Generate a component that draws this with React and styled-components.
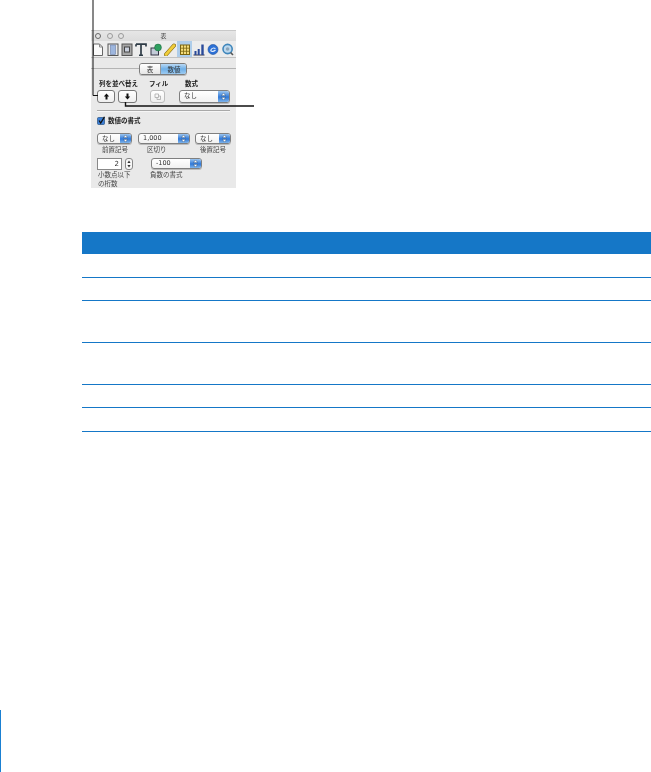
import React from "react";
import styled, { createGlobalStyle } from "styled-components";

const Global = createGlobalStyle`
  html, body { margin: 0; padding: 0; background: #fff; }
  body { font-family: "Liberation Sans", "Noto Sans CJK JP", sans-serif; }
`;
const BLUE = "#1577c7";
const CJK = `"Noto Sans CJK JP", "Liberation Sans", sans-serif`;

const Page = styled.div`
  position: relative; width: 651px; height: 772px; overflow: hidden;
  display: flex; flex-direction: column; background: #fff;
`;
const Leaders = styled.svg`
  position: absolute; left: 0; top: 0; width: 651px; height: 120px; pointer-events: none; z-index: 2;
`;
const Panel = styled.section`
  width: 145px; height: 158px; margin: 30px 0 44px 91px; background: #e9e9e9; overflow: hidden;
  display: flex; flex-direction: column; font-family: ${CJK}; filter: blur(0.45px); flex: none;
`;
const TitleBar = styled.div`
  height: 11px; flex: none; display: flex; align-items: center; gap: 5.5px; padding-left: 4px;
  background: linear-gradient(#c8c8c8 0, #c8c8c8 1px, #e6e6e6 1px, #dcdcdc 100%);
`;
const Light = styled.i`
  width: 6px; height: 6px; border-radius: 50%; flex: none; box-sizing: border-box;
  border: 1px solid ${p => (p.$dark ? "#666" : "#9a9a9a")}; background: #e4e4e4;
`;
const WinTitle = styled.span`
  font-size: 6px; color: #444; margin-left: 31px; line-height: 10px;
`;
const Toolbar = styled.div`
  height: 16px; flex: none; display: flex; background: #ececec; border-bottom: 1px solid #c2c2c2;
`;
const Tool = styled.div`
  width: 14.4px; height: 16px; flex: none; display: flex; align-items: center; justify-content: center;
  background: ${p => (p.$on ? "#aecdea" : "transparent")};
  svg { width: 12px; height: 13px; display: block; }
`;
const TabStrip = styled.div`
  flex: none; height: 12px; margin-top: 5px; padding-left: 48px;
  background: linear-gradient(transparent 5px, #b4b4b4 5px, #b4b4b4 6px, transparent 6px);
`;
const Tabs = styled.div`
  display: flex; height: 12px; width: 48px; box-sizing: border-box;
  border: 1px solid #7c7c7c; border-radius: 3px; overflow: hidden; box-shadow: 0 1px 0 #bbb;
`;
const Tab = styled.div`
  width: ${p => p.$w}px; flex: none; font-size: 6.5px; line-height: 10px; text-align: center; color: #333;
  background: ${p => (p.$on ? "linear-gradient(#b9d9f5, #6fb0e8 50%, #9dcbf2)" : "linear-gradient(#fff, #e6e6e6)")};
  border-right: ${p => (p.$on ? "none" : "1px solid #999")};
`;
const LabelRow = styled.div`
  display: flex; flex: none; height: ${p => p.$h || 7}px; margin-top: ${p => p.$mt || 0}px;
`;
const Label = styled.span`
  flex: none; width: ${p => p.$w}px; margin-left: ${p => p.$ml || 0}px; font-size: 6.5px;
  line-height: ${p => (p.$lh ? p.$lh : 7)}px; white-space: pre-line;
  font-weight: ${p => (p.$bold ? 700 : 400)}; color: ${p => (p.$bold ? "#1c1c1c" : "#444")};
  text-align: left;
`;
const Controls = styled.div`
  display: flex; flex: none; align-items: flex-start; margin-top: ${p => p.$mt}px; height: ${p => p.$h}px;
`;
const ArrowButton = styled.div`
  width: ${p => p.$w}px; height: 13px; margin-left: ${p => p.$ml}px; flex: none; box-sizing: border-box;
  border: 1px solid ${p => (p.$off ? "#bcbcbc" : "#777")}; border-radius: 3px;
  background: linear-gradient(#fff, #efefef); display: flex; align-items: center; justify-content: center;
  svg { width: 7px; height: 7px; display: block; }
`;
const Select = styled.div`
  width: ${p => p.$w}px; height: ${p => p.$h || 11}px; margin-left: ${p => p.$ml}px; flex: none; box-sizing: border-box;
  border: 1px solid #7f7f7f; border-radius: 3px; background: linear-gradient(#fff, #f1f1f1);
  display: flex; overflow: hidden; box-shadow: 0 1px 0 #bbb;
`;
const SelectText = styled.span`
  flex: 1; padding-left: 4px; font-size: 6.5px; line-height: 9px; color: #333;
  font-family: ${p => (p.$latin ? `"DejaVu Sans", sans-serif` : CJK)};
`;
const SelectCap = styled.div`
  width: 11px; flex: none; background: linear-gradient(#9cc6f0, #2f78d8 55%, #7fb4ea);
  display: flex; align-items: center; justify-content: center;
  svg { width: 5px; height: 7px; display: block; }
`;
const Divider = styled.div`
  height: 1px; flex: none; margin: 7px 0 0 6px; width: 133px; background: #a9a9a9; box-shadow: 0 1px 0 #f6f6f6;
`;
const CheckRow = styled.div`
  display: flex; flex: none; align-items: center; gap: 3px; height: 9px; margin: 5px 0 0 6px;
`;
const Check = styled.svg`
  width: 8px; height: 9px; display: block; flex: none;
`;
const NumberBox = styled.div`
  width: 25px; height: 12px; margin-left: 6px; flex: none; box-sizing: border-box; border: 1px solid #888;
  background: #fff; font: 7px/10px "DejaVu Sans", sans-serif; color: #333; text-align: right; padding-right: 2px;
`;
const Stepper = styled.div`
  width: 8px; height: 12px; margin-left: 3px; flex: none; box-sizing: border-box; border: 1px solid #888;
  border-radius: 3px; background: #f7f7f7; display: flex; align-items: center; justify-content: center;
  svg { width: 4px; height: 8px; display: block; }
`;
const Table = styled.div`
  margin-left: 82px; flex: none; display: flex; flex-direction: column;
`;
const Head = styled.div`
  height: 22px; background: ${BLUE};
`;
const Row = styled.div`
  height: ${p => p.$h}px; box-sizing: border-box; border-bottom: 1px solid ${BLUE};
`;
const EdgeBar = styled.div`
  margin-top: auto; width: 1px; height: 62px; background: #1a80d2; flex: none;
`;

const Updown = () => (
  <svg viewBox="0 0 5 7"><path d="M2.5 0 L4.5 2.6 H.5Z M2.5 7 L4.5 4.4 H.5Z" fill="#fff" stroke="#123" strokeWidth=".3" /></svg>
);
const Sel = ({ w, ml, h, latin, children }) => (
  <Select $w={w} $ml={ml} $h={h}>
    <SelectText $latin={latin}>{children}</SelectText>
    <SelectCap><Updown /></SelectCap>
  </Select>
);

const tools = [
  <svg viewBox="0 0 12 13" key="d"><path d="M1.5 1 H7.5 L10.5 4 V12.5 H1.5Z" fill="#fafafa" stroke="#666" /><path d="M7.5 1V4H10.5" fill="none" stroke="#888" /></svg>,
  <svg viewBox="0 0 12 13" key="c"><rect x="1" y="1" width="10" height="11.5" fill="#e8e8e8" stroke="#555" /><rect x="3.5" y="2" width="5" height="9.5" fill="#9db6de" stroke="#6b7fa8" strokeWidth=".6" /></svg>,
  <svg viewBox="0 0 12 13" key="b"><rect x="1" y="1" width="10" height="11.5" fill="#a6a6a6" stroke="#555" /><rect x="3.5" y="4" width="5" height="5" fill="#c9cfdc" stroke="#444" /></svg>,
  <svg viewBox="0 0 12 13" key="t"><path d="M1 1.2 H11 V3.6 M1 1.2 V3.6 M6 1.2 V12.4 M4 12.4 H8" fill="none" stroke="#2f3c47" strokeWidth="1.7" /></svg>,
  <svg viewBox="0 0 12 13" key="s"><rect x="1" y="5" width="7.5" height="7" fill="#c3cbd8" stroke="#334" /><circle cx="8" cy="4.5" r="3.4" fill="#2fa060" stroke="#1c6b3f" strokeWidth=".6" /></svg>,
  <svg viewBox="0 0 12 13" key="p"><path d="M2 11.5 L10 2.5" stroke="#7a6410" strokeWidth="4" strokeLinecap="round" /><path d="M2 11.5 L10 2.5" stroke="#f0cc3a" strokeWidth="2.8" strokeLinecap="round" /></svg>,
  <svg viewBox="0 0 12 13" key="g"><rect x="1.5" y="2" width="9" height="9.5" fill="#f5dd7a" stroke="#7a6410" /><path d="M1.5 5.2H10.5M1.5 8.3H10.5M4.5 2V11.5M7.5 2V11.5" stroke="#7a6410" strokeWidth=".8" /></svg>,
  <svg viewBox="0 0 12 13" key="h"><path d="M0.5 12 H11.5" stroke="#334" /><rect x="1.5" y="8" width="2" height="4" fill="#2a4a9a" /><rect x="4.7" y="6" width="2" height="6" fill="#2a4a9a" /><rect x="8.3" y="1.5" width="2.4" height="10.5" fill="#2a4a9a" /></svg>,
  <svg viewBox="0 0 12 13" key="l"><circle cx="6" cy="6.5" r="5" fill="#2c70d6" stroke="#1d4f9c" strokeWidth=".6" /><path d="M3.5 7.5 C5 4.5 6.5 4.5 8.5 5.5 M3.5 7.5 C5 9 7 8.6 8.5 7" stroke="#e7f0fb" strokeWidth="1.1" fill="none" /></svg>,
  <svg viewBox="0 0 12 13" key="q"><circle cx="5.6" cy="6" r="4.6" fill="#bcd8ee" stroke="#3f86bb" strokeWidth="1.6" /><circle cx="5.6" cy="6" r="1.8" fill="#8ba4b8" /><path d="M8.6 9.5 L11 12" stroke="#555" strokeWidth="1.6" /></svg>,
];

export default function App() {
  return (
    <Page>
      <Global />
      <Leaders viewBox="0 0 651 120">
        <path d="M93 0 V95.5 H98" fill="none" stroke="#111" strokeWidth="1" />
        <path d="M125.5 102 V106 H254" fill="none" stroke="#111" strokeWidth="1.4" />
      </Leaders>
      <Panel>
        <TitleBar>
          <Light $dark /><Light /><Light />
          <WinTitle>表</WinTitle>
        </TitleBar>
        <Toolbar>
          {tools.map((t, i) => <Tool key={i} $on={i === 6}>{t}</Tool>)}
        </Toolbar>
        <TabStrip>
          <Tabs>
            <Tab $w={20}>表</Tab>
            <Tab $w={26} $on>数値</Tab>
          </Tabs>
        </TabStrip>
        <LabelRow $mt={5}>
          <Label $bold $w={50} $ml={8}>列を並べ替え</Label>
          <Label $bold $w={25}>フィル</Label>
          <Label $bold $w={20} $ml={11}>数式</Label>
        </LabelRow>
        <Controls $mt={3} $h={13}>
          <ArrowButton $w={18} $ml={6}><svg viewBox="0 0 7 7"><path d="M3.5 .5 L6.2 3.6 H4.5 V6.5 H2.5 V3.6 H.8Z" fill="#111" /></svg></ArrowButton>
          <ArrowButton $w={19} $ml={3}><svg viewBox="0 0 7 7"><path d="M3.5 6.5 L6.2 3.4 H4.5 V.5 H2.5 V3.4 H.8Z" fill="#111" /></svg></ArrowButton>
          <ArrowButton $w={15} $ml={13} $off><svg viewBox="0 0 7 7"><path d="M1 1H4.5V4.5H1Z M3 4.5V6.5H6.5V3H4.5" fill="none" stroke="#aaa" strokeWidth=".8" /></svg></ArrowButton>
          <Sel w={51} ml={14} h={13}>なし</Sel>
        </Controls>
        <Divider />
        <CheckRow>
          <Check viewBox="0 0 8 9"><rect x=".5" y="1.5" width="7" height="7" rx="1" fill="#3b7fd8" stroke="#25507f" strokeWidth=".7" /><path d="M2 4.5 L3.7 7 L7.5 .8" fill="none" stroke="#111" strokeWidth="1.3" /></Check>
          <Label $bold $w={40} $lh={9}>数値の書式</Label>
        </CheckRow>
        <Controls $mt={8} $h={11}>
          <Sel w={35} ml={6}>なし</Sel>
          <Sel w={52} ml={6} latin>1,000</Sel>
          <Sel w={36} ml={5}>なし</Sel>
        </Controls>
        <LabelRow $mt={2}>
          <Label $w={30} $ml={11}>前置記号</Label>
          <Label $w={22} $ml={15}>区切り</Label>
          <Label $w={30} $ml={31}>後置記号</Label>
        </LabelRow>
        <Controls $mt={5} $h={12}>
          <NumberBox>2</NumberBox>
          <Stepper><svg viewBox="0 0 4 8"><path d="M2 .5 L3.6 3 H.4Z M2 7.5 L3.6 5 H.4Z" fill="#333" /></svg></Stepper>
          <Sel w={51} ml={18} latin>-100</Sel>
        </Controls>
        <LabelRow $h={18}>
          <Label $w={40} $ml={7} $lh={9}>{"小数点以下\nの桁数"}</Label>
          <Label $w={40} $ml={12} $lh={9}>負数の書式</Label>
        </LabelRow>
      </Panel>
      <Table>
        <Head />
        <Row $h={24} />
        <Row $h={23} />
        <Row $h={42} />
        <Row $h={42} />
        <Row $h={23} />
        <Row $h={24} />
      </Table>
      <EdgeBar />
    </Page>
  );
}
